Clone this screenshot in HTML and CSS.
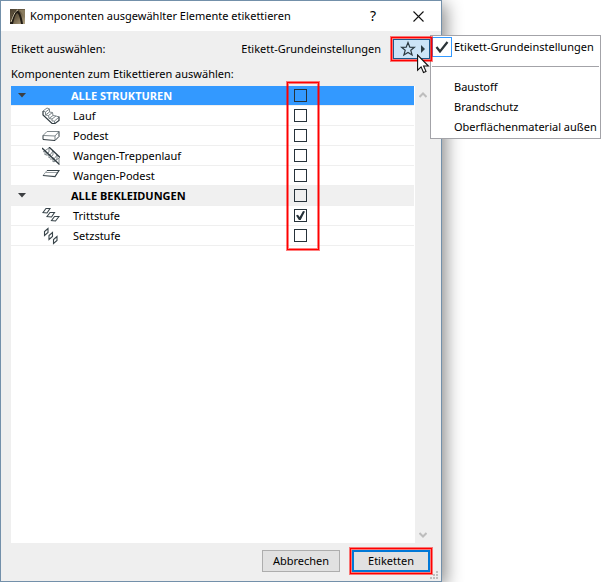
FILE: index.html
```html
<!DOCTYPE html>
<html lang="de">
<head>
  <meta charset="UTF-8">
  <title>Komponenten ausgewählter Elemente etikettieren</title>
  <link rel="stylesheet" href="styles.css">
</head>
<body>
  <div class="dialog" role="dialog" aria-labelledby="dialog-title">
    <div class="titlebar">
      <svg class="app-icon" viewBox="0 0 15 15">
        <defs>
          <linearGradient id="app-bg" x1="0" x2="1" y1="0" y2="1">
            <stop offset="0" stop-color="#4a4030"/>
            <stop offset="0.5" stop-color="#6b5d45"/>
            <stop offset="1" stop-color="#b9aa8a"/>
          </linearGradient>
        </defs>
        <rect width="15" height="15" fill="url(#app-bg)"/>
        <path d="M9 1h6v8L11 3z" fill="#8b7d60"/>
        <path d="M0 14C2 7 4 2 7 1c3 1 5 7 6 14h-2C10 9 9 5 7 4 5 6 4 10 3 15H0z" fill="#211c15"/>
        <path d="M1 13C3 7 5 2 8 1" fill="none" stroke="#d6c9a9"/>
      </svg>
      <h1 class="title" id="dialog-title">Komponenten ausgewählter Elemente etikettieren</h1>
      <button class="title-button" type="button">?</button>
      <button class="title-button close" type="button" aria-label="Schließen">
        <svg width="11" height="11" viewBox="0 0 11 11"><path d="M.5.5l10 10M10.5.5l-10 10" fill="none" stroke="#111" stroke-width="1.1"/></svg>
      </button>
    </div>

    <div class="content">
      <div class="label-row">
        <span>Etikett auswählen:</span>
        <span class="label-current">Etikett-Grundeinstellungen</span>
        <div class="favorite">
          <button class="favorite-button" type="button" aria-label="Favoriten" aria-haspopup="menu">
            <svg width="16" height="16" viewBox="0 0 16 16"><path d="M8 1.5l1.8 4.600 4.700.2-3.700 3 1.300 4.700L8 11.400 3.900 14l1.300-4.700-3.700-3 4.700-.2z" fill="none" stroke="#2b3a42" stroke-width="1.2"/></svg>
            <svg width="4" height="8" viewBox="0 0 4 8"><path d="M0 0l4 4-4 4z" fill="#2b3a42"/></svg>
          </button>
          <div class="menu" role="menu">
            <button class="menu-item" type="button" role="menuitem">
              <span class="menu-check">
                <svg width="14" height="12" viewBox="0 0 14 12"><path d="M1.500 6l3.500 4.500L12.500 1" fill="none" stroke="#2b3438" stroke-width="2.2"/></svg>
              </span>
              Etikett-Grundeinstellungen
            </button>
            <div class="menu-separator"></div>
            <button class="menu-item" type="button" role="menuitem">Baustoff</button>
            <button class="menu-item" type="button" role="menuitem">Brandschutz</button>
            <button class="menu-item" type="button" role="menuitem">Oberflächenmaterial außen</button>
          </div>
          <div class="highlight"></div>
          <svg class="cursor" width="14" height="20" viewBox="0 0 14 20"><path d="M.6 1v15.200l3.500-3.300 2.400 5.600 2.500-1.100-2.400-5.400h4.800z" fill="#fff" stroke="#111" stroke-width="1.1"/></svg>
        </div>
      </div>

      <div class="list-title">Komponenten zum Etikettieren auswählen:</div>

      <div class="list">
        <div class="rows">
          <div class="row group selected">
            <svg class="arrow" width="8" height="5" viewBox="0 0 8 5"><path d="M0 0h8L4 4.500z" fill="#3c3f42"/></svg>
            <label class="name" for="all-structures">ALLE STRUKTUREN</label>
            <input class="check" type="checkbox" id="all-structures">
          </div>
          <div class="row">
            <svg class="icon" viewBox="0 0 18 18"><path d="M5 1l2.500 1v3l3 .5.5 3 3 .5 3 1M1 4l4-3M3.500 5l4-3M3.500 8l4-3M6.500 8.500l4-3M7 11.500l4-3M10 12l4-3M12.500 14l4-3.500M1 4l2.500 1v3l3 .5.5 3 3 .5v2l2.500 0v2.500" fill="none" stroke="#7e878b"/><path d="M1 4v4l9 8.500h3l4-3V9.500" fill="none" stroke="#2f3a40" stroke-width="1.2"/></svg>
            <label class="name" for="lauf">Lauf</label>
            <input class="check" type="checkbox" id="lauf">
          </div>
          <div class="row">
            <svg class="icon" viewBox="0 0 18 18"><path d="M1 8.500l4-4h12l-4 4.500zM13 13.500V9" fill="none" stroke="#7e878b"/><path d="M1 8.500v4l12 1 4-4v-5" fill="none" stroke="#2f3a40"/></svg>
            <label class="name" for="podest">Podest</label>
            <input class="check" type="checkbox" id="podest">
          </div>
          <div class="row">
            <svg class="icon" viewBox="0 0 18 18"><path d="M1 5l6-4v4l-4 3V4M4 8h4l3-4v4l-4 3V7M8 12h4l3-4v4l-4 3v-5M12 15l5-4v5" fill="none" stroke="#7e878b"/><path d="M0 1l17.500 16.500M7 0l11 10.500" fill="none" stroke="#2f3a40" stroke-width="1.3"/></svg>
            <label class="name" for="wangen-treppenlauf">Wangen-Treppenlauf</label>
            <input class="check" type="checkbox" id="wangen-treppenlauf">
          </div>
          <div class="row">
            <svg class="icon" viewBox="0 0 18 18"><path d="M1 8.500L5 3.500M4 5.500h12" fill="none" stroke="#9aa1a4"/><path d="M5 3.500h12l-4 6-12-1" fill="none" stroke="#39454b" stroke-width="1.2"/></svg>
            <label class="name" for="wangen-podest">Wangen-Podest</label>
            <input class="check" type="checkbox" id="wangen-podest">
          </div>
          <div class="row group">
            <svg class="arrow" width="8" height="5" viewBox="0 0 8 5"><path d="M0 0h8L4 4.500z" fill="#3c3f42"/></svg>
            <label class="name" for="all-claddings">ALLE BEKLEIDUNGEN</label>
            <input class="check" type="checkbox" id="all-claddings">
          </div>
          <div class="row">
            <svg class="icon" viewBox="0 0 18 18"><path d="M1 5.500l3-4h4l-3 4.500zM5 9.500l3-4h4.500l-3 4.500zM9.500 13.500l3-4H17l-3.500 4.500z" fill="none" stroke="#39454b" stroke-width="1.1"/></svg>
            <label class="name" for="trittstufe">Trittstufe</label>
            <input class="check" type="checkbox" id="trittstufe" checked>
          </div>
          <div class="row">
            <svg class="icon" viewBox="0 0 18 18"><path d="M2.500 8.500v-4l3.500-3v4zM7 12.500v-4l3.500-3v4zM11.500 16.500v-4l3.500-3v4z" fill="none" stroke="#39454b" stroke-width="1.1"/></svg>
            <label class="name" for="setzstufe">Setzstufe</label>
            <input class="check" type="checkbox" id="setzstufe">
          </div>
          <div class="highlight checks"></div>
        </div>
        <div class="scrollbar">
          <svg width="8" height="6" viewBox="0 0 8 6"><path d="M.5 5L4 1.500 7.500 5" fill="none" stroke="#bdbdbd" stroke-width="2"/></svg>
          <svg width="8" height="6" viewBox="0 0 8 6"><path d="M.5 1L4 4.500 7.500 1" fill="none" stroke="#bdbdbd" stroke-width="2"/></svg>
        </div>
      </div>

      <div class="buttons">
        <button class="button" type="button">Abbrechen</button>
        <div class="primary-wrap">
          <button class="button primary" type="button">Etiketten</button>
          <div class="highlight"></div>
        </div>
      </div>
    </div>
    <svg class="grip" width="8" height="8" viewBox="0 0 8 8"><path d="M6 0h2v2H6zM3 3h2v2H3zM6 3h2v2H6zM0 6h2v2H0zM3 6h2v2H3zM6 6h2v2H6z" fill="#bfbfbf"/></svg>
  </div>
</body>
</html>
```
FILE: styles.css
```css
* {
  box-sizing: border-box;
}
body {
  margin: 0;
  padding-right: 159px;
  min-height: 100vh;
  display: flex;
  overflow: hidden;
  background: #fff;
  color: #000;
  font: 11px/16px "Noto Sans", "Open Sans", sans-serif;
}
button {
  font: inherit;
  color: inherit;
  border: none;
  background: none;
  padding: 0;
}
svg {
  display: block;
  flex: none;
}

.dialog {
  position: relative;
  flex: 1;
  display: flex;
  flex-direction: column;
  border: 1px solid #7390aa;
  background: #efefef;
  box-shadow: 4px 4px 16px rgba(0, 0, 0, 0.45);
}

/* title bar */
.titlebar {
  display: flex;
  align-items: center;
  height: 30px;
  padding: 0 13px 0 9px;
  background: #fff;
}
.app-icon {
  width: 15px;
  height: 15px;
}
.title {
  flex: 1;
  margin: 0 0 0 5px;
  font-size: 11px;
  font-weight: normal;
  white-space: nowrap;
}
.title-button {
  width: 20px;
  height: 24px;
  margin-left: 25px;
  display: flex;
  align-items: center;
  justify-content: center;
  font-size: 14px;
}

.content {
  flex: 1;
  display: flex;
  flex-direction: column;
  padding: 8px 11px 9px 10px;
}

/* label selection */
.label-row {
  display: flex;
  align-items: center;
  height: 20px;
}
.label-current {
  margin-left: auto;
  margin-right: 12px;
}
.favorite {
  position: relative;
}
.favorite-button {
  display: flex;
  align-items: center;
  gap: 5px;
  width: 37px;
  height: 20px;
  padding-left: 6px;
  border: 1px solid #1a5a8c;
  background: #cce4f7;
}

/* favorites menu */
.menu {
  position: absolute;
  z-index: 1;
  top: -4px;
  left: 100%;
  width: 171px;
  padding: 1px 1px 0;
  height: 104px;
  border: 1px solid #a3a3a8;
  background: #fff;
}
.menu-item {
  display: flex;
  align-items: center;
  position: relative;
  width: 100%;
  height: 20px;
  padding-left: 22px;
  white-space: nowrap;
}
.menu-check {
  position: absolute;
  left: 0;
  top: 0;
  width: 20px;
  height: 20px;
  display: flex;
  align-items: center;
  justify-content: center;
  border: 1px solid #3399ff;
}
.menu-separator {
  height: 1px;
  margin: 9px 0 10px;
  background: #a3a3a8;
}

/* red frames around the controls in question */
.highlight {
  position: absolute;
  z-index: 2;
  inset: -2px;
  border: 1px solid #f00;
  box-shadow: 0 0 0 1px rgba(255, 0, 0, 0.5), inset 0 0 0 1px rgba(255, 0, 0, 0.5);
  pointer-events: none;
}
.cursor {
  position: absolute;
  z-index: 3;
  top: 15px;
  left: 24px;
}

/* component list */
.list-title {
  padding: 7px 0 4px;
}
.list {
  flex: 1;
  display: flex;
  background: #fff;
}
.rows {
  position: relative;
  flex: 1;
}
.row {
  display: flex;
  align-items: center;
  height: 20px;
  padding-left: 31px;
  padding-right: 107px;
  border-bottom: 1px solid #efefef;
}
.icon {
  width: 18px;
  height: 18px;
}
.name {
  flex: 1;
  margin-left: 13px;
}
.group {
  padding-left: 7px;
  background: #f0f0f0;
  font-weight: bold;
}
.group .name {
  margin-left: 45px;
}
.selected {
  background: #3399ff;
  color: #fff;
}
.check {
  appearance: none;
  position: relative;
  width: 13px;
  height: 13px;
  margin: 0;
  border: 1px solid #26323a;
}
.check:checked::after {
  content: "";
  position: absolute;
  inset: 1px;
  background: #26323a;
  clip-path: polygon(0 50%, 22% 42%, 40% 68%, 78% 0, 100% 5%, 52% 100%, 32% 100%);
}
.checks {
  inset: -4px 95px auto auto;
  width: 32px;
  height: 168px;
}

.scrollbar {
  display: flex;
  flex-direction: column;
  justify-content: space-between;
  align-items: center;
  width: 15px;
  padding: 6px 0 5px;
  margin-left: 1px;
  background: #efefef;
}

/* footer */
.buttons {
  display: flex;
  justify-content: flex-end;
  gap: 12px;
  padding-top: 7px;
}
.button {
  width: 78px;
  height: 22px;
  border: 1px solid #adadad;
  background: #e1e1e1;
}
.primary-wrap {
  position: relative;
}
.primary {
  display: block;
  border: 2px solid #0078d7;
}
.grip {
  position: absolute;
  right: 3px;
  bottom: 2px;
}
```
